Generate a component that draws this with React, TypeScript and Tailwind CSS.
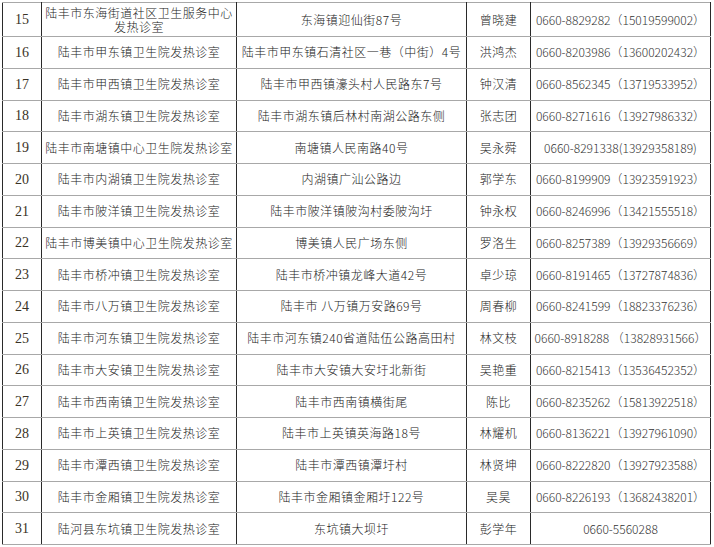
const ROWS: [string, string, string, string, string][] = [
  ["15", "陆丰市东海街道社区卫生服务中心发热诊室", "东海镇迎仙街87号", "曾晓建", "0660-8829282（15019599002）"],
  ["16", "陆丰市甲东镇卫生院发热诊室", "陆丰市甲东镇石清社区一巷（中街）4号", "洪鸿杰", "0660-8203986（13600202432）"],
  ["17", "陆丰市甲西镇卫生院发热诊室", "陆丰市甲西镇濠头村人民路东7号", "钟汉清", "0660-8562345（13719533952）"],
  ["18", "陆丰市湖东镇卫生院发热诊室", "陆丰市湖东镇后林村南湖公路东侧", "张志团", "0660-8271616（13927986332）"],
  ["19", "陆丰市南塘镇中心卫生院发热诊室", "南塘镇人民南路40号", "吴永舜", "0660-8291338(13929358189)"],
  ["20", "陆丰市内湖镇卫生院发热诊室", "内湖镇广汕公路边", "郭学东", "0660-8199909（13923591923）"],
  ["21", "陆丰市陂洋镇卫生院发热诊室", "陆丰市陂洋镇陂沟村委陂沟圩", "钟永权", "0660-8246996（13421555518）"],
  ["22", "陆丰市博美镇中心卫生院发热诊室", "博美镇人民广场东侧", "罗洛生", "0660-8257389（13929356669）"],
  ["23", "陆丰市桥冲镇卫生院发热诊室", "陆丰市桥冲镇龙峰大道42号", "卓少琼", "0660-8191465（13727874836）"],
  ["24", "陆丰市八万镇卫生院发热诊室", "陆丰市 八万镇万安路69号", "周春柳", "0660-8241599（18823376236）"],
  ["25", "陆丰市河东镇卫生院发热诊室", "陆丰市河东镇240省道陆伍公路高田村", "林文枝", "0660-8918288 （13828931566）"],
  ["26", "陆丰市大安镇卫生院发热诊室", "陆丰市大安镇大安圩北新街", "吴艳重", "0660-8215413（13536452352）"],
  ["27", "陆丰市西南镇卫生院发热诊室", "陆丰市西南镇横街尾", "陈比", "0660-8235262（15813922518）"],
  ["28", "陆丰市上英镇卫生院发热诊室", "陆丰市上英镇英海路18号", "林耀机", "0660-8136221（13927961090）"],
  ["29", "陆丰市潭西镇卫生院发热诊室", "陆丰市潭西镇潭圩村", "林贤坤", "0660-8222820（13927923588）"],
  ["30", "陆丰市金厢镇卫生院发热诊室", "陆丰市金厢镇金厢圩122号", "吴昊", "0660-8226193（13682438201）"],
  ["31", "陆河县东坑镇卫生院发热诊室", "东坑镇大坝圩", "彭学年", "0660-5560288"],
];

const cell = "border-x border-x-[#2a2a2a] border-y border-y-[#a8a8a8] text-center align-middle";

export default function App() {
  return (
    <div className="min-h-[547px] w-[714px] bg-white pl-[2px] pt-[2px] text-[#222]">
      <table
        className="w-[708px] table-fixed border-collapse border-b border-b-[#555]"
        style={{ fontFamily: '"Noto Sans CJK SC", sans-serif' }}
      >
        <colgroup>
          <col className="w-[39px]" />
          <col className="w-[195px]" />
          <col className="w-[230px]" />
          <col className="w-[64px]" />
          <col className="w-[180px]" />
        </colgroup>
        <tbody>
          {ROWS.map(([no, name, addr, person, phone], i) => (
            <tr key={no} className={i === 0 ? "h-[34px]" : "h-[31.75px]"}>
              <td className={`${cell} font-['Liberation_Serif',serif] text-[14px] text-[#3a3326]`}>{no}</td>
              <td className={`${cell} px-[2px] text-[12px] leading-[14px] font-light tracking-[0.5px]`}>{name}</td>
              <td className={`${cell} px-[2px] text-[12px] leading-[14px] font-light tracking-[0.5px]`}>{addr}</td>
              <td className={`${cell} text-[12px] font-light tracking-[0.5px]`}>{person}</td>
              <td className={`${cell} whitespace-nowrap text-[12px] font-light text-[#333]`}>{phone}</td>
            </tr>
          ))}
        </tbody>
      </table>
    </div>
  );
}
